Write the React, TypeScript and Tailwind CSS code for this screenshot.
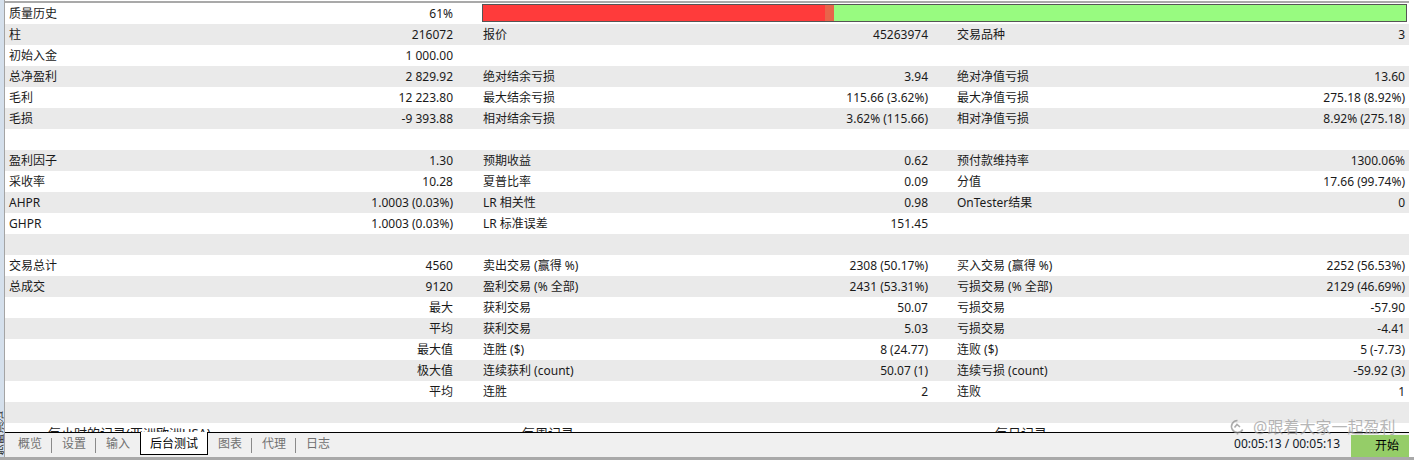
import React from 'react';

type Cell = [string, string];
type Row = { c1?: Cell; c2?: Cell; c3?: Cell; bar?: boolean; header?: boolean };

const rows: Row[] = [
  { c1: ['质量历史', '61%'], bar: true },
  { c1: ['柱', '216072'], c2: ['报价', '45263974'], c3: ['交易品种', '3'] },
  { c1: ['初始入金', '1 000.00'] },
  { c1: ['总净盈利', '2 829.92'], c2: ['绝对结余亏损', '3.94'], c3: ['绝对净值亏损', '13.60'] },
  { c1: ['毛利', '12 223.80'], c2: ['最大结余亏损', '115.66 (3.62%)'], c3: ['最大净值亏损', '275.18 (8.92%)'] },
  { c1: ['毛损', '-9 393.88'], c2: ['相对结余亏损', '3.62% (115.66)'], c3: ['相对净值亏损', '8.92% (275.18)'] },
  {},
  { c1: ['盈利因子', '1.30'], c2: ['预期收益', '0.62'], c3: ['预付款维持率', '1300.06%'] },
  { c1: ['采收率', '10.28'], c2: ['夏普比率', '0.09'], c3: ['分值', '17.66 (99.74%)'] },
  { c1: ['AHPR', '1.0003 (0.03%)'], c2: ['LR 相关性', '0.98'], c3: ['OnTester结果', '0'] },
  { c1: ['GHPR', '1.0003 (0.03%)'], c2: ['LR 标准误差', '151.45'] },
  {},
  { c1: ['交易总计', '4560'], c2: ['卖出交易 (赢得 %)', '2308 (50.17%)'], c3: ['买入交易 (赢得 %)', '2252 (56.53%)'] },
  { c1: ['总成交', '9120'], c2: ['盈利交易 (% 全部)', '2431 (53.31%)'], c3: ['亏损交易 (% 全部)', '2129 (46.69%)'] },
  { c1: ['', '最大'], c2: ['获利交易', '50.07'], c3: ['亏损交易', '-57.90'] },
  { c1: ['', '平均'], c2: ['获利交易', '5.03'], c3: ['亏损交易', '-4.41'] },
  { c1: ['', '最大值'], c2: ['连胜 ($)', '8 (24.77)'], c3: ['连败 ($)', '5 (-7.73)'] },
  { c1: ['', '极大值'], c2: ['连续获利 (count)', '50.07 (1)'], c3: ['连续亏损 (count)', '-59.92 (3)'] },
  { c1: ['', '平均'], c2: ['连胜', '2'], c3: ['连败', '1'] },
  {},
  { header: true },
];

const tabs = ['概览', '设置', '输入', '后台测试', '图表', '代理', '日志'];

function Pair({ cell }: { cell?: Cell }) {
  if (!cell) return null;
  return (
    <>
      <span>{cell[0]}</span>
      <span>{cell[1]}</span>
    </>
  );
}

function StatRow({ row, idx }: { row: Row; idx: number }) {
  const bg = idx % 2 === 1 ? 'bg-[#eaeaea]' : 'bg-white';
  if (row.header) {
    return (
      <div className={`h-[21px] shrink-0 flex leading-[21px] text-[13px] ${bg}`}>
        <div className="w-[476px] pl-[43px]">每小时的记录(亚洲欧洲USA)</div>
        <div className="w-[474px] pl-[41px]">每周记录</div>
        <div className="flex-1 pl-[40px]">每日记录</div>
      </div>
    );
  }
  return (
    <div className={`h-[21px] shrink-0 flex leading-[21px] ${bg}`}>
      <div className="w-[476px] pl-[4px] pr-[28px] flex justify-between">
        <Pair cell={row.c1} />
      </div>
      {row.bar ? (
        <div className="flex-1 pt-[1px] pr-[2px]">
          <div className="ml-[1px] h-[18px] border border-[#555] flex">
            <div className="w-[342px] bg-[#ff3b3b]" />
            <div className="w-[9px] bg-[#e8644a]" />
            <div className="flex-1 bg-[#98fb80]" />
          </div>
        </div>
      ) : (
        <>
          <div className="w-[474px] pl-[2px] pr-[27px] flex justify-between">
            <Pair cell={row.c2} />
          </div>
          <div className="flex-1 pl-[2px] pr-[4px] flex justify-between">
            <Pair cell={row.c3} />
          </div>
        </>
      )}
    </div>
  );
}

export default function App() {
  return (
    <div className="w-[1414px] h-[460px] bg-white flex flex-col overflow-hidden relative text-[12px] text-[#1a1a1a] font-['Noto_Sans','Noto_Sans_CJK_SC',sans-serif]">
      <div className="flex flex-1 min-h-0">
        {/* left dock strip */}
        <div className="w-[5px] shrink-0 bg-[#d5e0ec] border-r border-[#a4a4a4] flex flex-col justify-end overflow-hidden">
          <span className="[writing-mode:vertical-rl] rotate-180 text-[11px] leading-[11px] text-[#333] -ml-[6px] mb-[2px]">策略测试</span>
        </div>

        <div className="flex-1 flex flex-col min-w-0">
          <div className="h-[1px] shrink-0 bg-white" />
          <div className="h-[2px] shrink-0 bg-[#a9a9a9]" />
          <div className="flex-1 flex flex-col overflow-hidden">
            {rows.map((r, i) => (
              <StatRow key={i} row={r} idx={i} />
            ))}
          </div>

          {/* tab bar */}
          <div className="h-[25px] shrink-0 border-t border-black bg-[#f0f0f0] flex items-start">
            <div className="flex items-center pl-[3px] text-[#707070]">
              {tabs.map((t, i) => {
                const active = t === '后台测试';
                const prevActive = tabs[i - 1] === '后台测试';
                return (
                  <React.Fragment key={t}>
                    {i > 0 && !active && !prevActive && <div className="w-[1px] h-[15px] bg-[#8a8a8a] mt-[3px]" />}
                    {active ? (
                      <div className="h-[23px] -mt-[1px] ml-[1px] px-[9px] bg-white border border-black border-t-0 text-black leading-[23px]">{t}</div>
                    ) : (
                      <div className="h-[22px] pl-[10px] pr-[9px] leading-[22px]">{t}</div>
                    )}
                  </React.Fragment>
                );
              })}
            </div>
            <div className="flex-1" />
            <div className="flex items-start">
              <span className="leading-[22px] text-[#111827] mr-[11px]">00:05:13 / 00:05:13</span>
              <div className="mt-[2px] h-[22px] w-[58px] bg-[#95cd68] pl-[24px] leading-[22px] text-black">开始</div>
            </div>
          </div>
        </div>

        <div className="w-[5px] shrink-0 bg-white" />
      </div>
      <div className="h-[3px] shrink-0 bg-[#a9a9a9]" />

      {/* watermark overlay */}
      <div className="absolute left-[1229px] top-[417px] flex items-center gap-[7px] opacity-70 pointer-events-none">
        <svg width="17" height="18" viewBox="0 0 17 18" fill="none" stroke="#8a8a8a" strokeWidth="1.6">
          <path d="M8.5 2.5a6 6 0 1 0 5.2 9" />
          <path d="M5.5 9.5l2.5-3 3 2.5" />
          <path d="M8.5 16.5v-2" />
        </svg>
        <span className="text-[16px] leading-[20px] text-[#9a9a9a] [text-shadow:0_0_1px_#fff]">@跟着大家一起盈利</span>
      </div>
    </div>
  );
}
